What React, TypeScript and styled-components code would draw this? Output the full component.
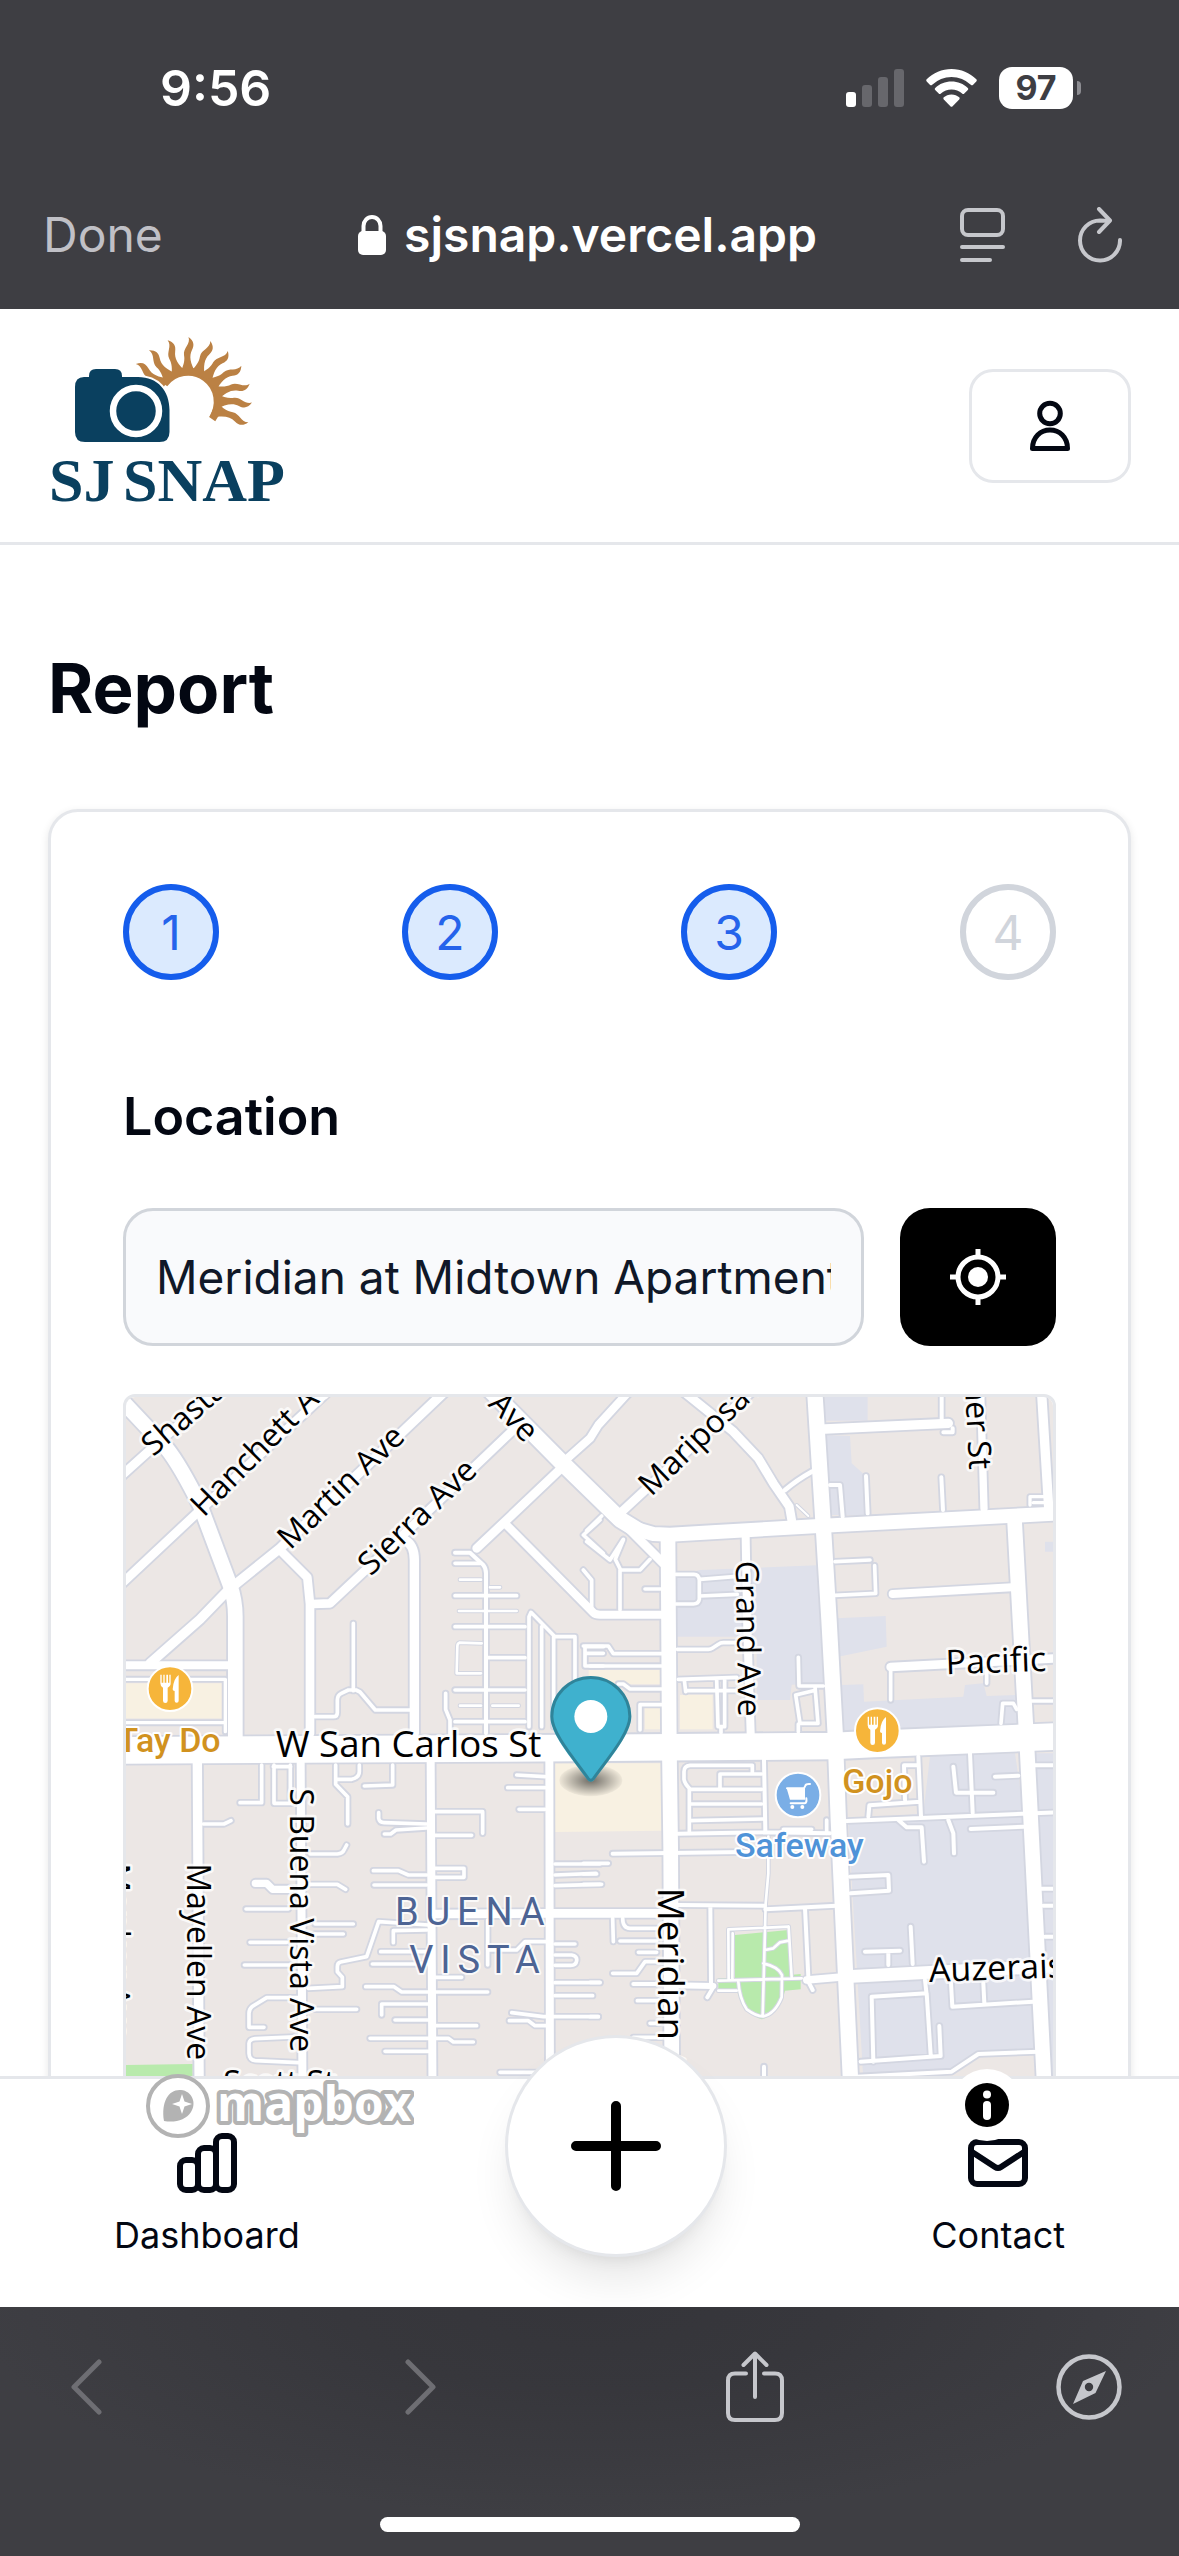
import React, { useState } from 'react';
import styled, { createGlobalStyle } from 'styled-components';

const GlobalStyle = createGlobalStyle`
  *, *::before, *::after { box-sizing: border-box; }
  body {
    margin: 0;
    background: #ffffff;
    color: #030712;
    font-family: Inter, "Liberation Sans", sans-serif;
    -webkit-font-smoothing: antialiased;
  }
  button, input { font: inherit; color: inherit; }
  button { border: 0; padding: 0; background: none; cursor: pointer; }
  h1, h2, ol { margin: 0; padding: 0; }
`;

/* ---------- Shell ---------- */

const Screen = styled.div`
  display: flex;
  flex-direction: column;
  height: 100vh;
`;

const BrowserTop = styled.header`
  flex: none;
  background: #3e3e43;
  padding-bottom: 16px;
`;

const StatusBar = styled.div`
  display: flex;
  align-items: center;
  justify-content: space-between;
  height: 176px;
  padding: 0 98px 0 160px;
  color: #ffffff;
`;

const Clock = styled.time`
  font-size: 50px;
  font-weight: 600;
  line-height: 60px;
`;

const StatusIcons = styled.div`
  display: flex;
  align-items: center;
  gap: 22px;
`;

const Battery = styled.div`
  display: flex;
  align-items: center;
  gap: 4px;
`;

const BatteryLevel = styled.span`
  width: 74px;
  height: 42px;
  border-radius: 13px;
  background: #ffffff;
  color: #3e3e43;
  font-size: 34px;
  font-weight: 700;
  line-height: 42px;
  text-align: center;
`;

const BatteryTip = styled.span`
  width: 4px;
  height: 14px;
  border-radius: 0 4px 4px 0;
  background: #8d8d92;
`;

const AddressBar = styled.div`
  display: grid;
  grid-template-columns: 1fr auto 1fr;
  align-items: center;
  height: 117px;
  padding: 0 57px 0 43px;
`;

const DoneButton = styled.button`
  justify-self: start;
  color: #c0c0c6;
  font-size: 48px;
  line-height: 60px;
`;

const Site = styled.div`
  display: flex;
  align-items: center;
  gap: 18px;
  padding-left: 10px;
  color: #ffffff;
  font-size: 48px;
  font-weight: 600;
  line-height: 60px;
`;

const AddressActions = styled.div`
  display: flex;
  justify-self: end;
  align-items: center;
  gap: 73px;
`;

const IconButton = styled.button<{ $dim?: boolean }>`
  display: flex;
  align-items: center;
  justify-content: center;
  color: ${(p) => (p.$dim ? '#6e6e73' : '#c6c7cc')};
`;

const ToolButton = styled(IconButton)`
  width: 66px;
`;

const Viewport = styled.div`
  position: relative;
  flex: 1;
  min-height: 0;
  overflow: hidden;
  background: #ffffff;
`;

const BrowserBottom = styled.footer`
  flex: none;
  display: flex;
  flex-direction: column;
  justify-content: space-between;
  align-items: center;
  height: 249px;
  padding: 44px 0 24px;
  background: radial-gradient(ellipse 52% 210px at 50% 0, #35353a 0%, #37373c 40%, #3e3e43 100%);
`;

const BrowserTools = styled.div`
  display: flex;
  align-items: center;
  justify-content: space-between;
  align-self: stretch;
  height: 72px;
  padding: 0 57px 0 54px;
`;

const HomeBar = styled.div`
  width: 420px;
  height: 15px;
  border-radius: 8px;
  background: #ffffff;
`;

/* ---------- Site ---------- */

const SiteHeader = styled.header`
  display: flex;
  align-items: center;
  justify-content: space-between;
  height: 236px;
  padding: 0 48px;
  border-bottom: 3px solid #e5e7eb;
`;

const HomeLink = styled.a`
  display: flex;
`;

const AccountButton = styled.button`
  display: flex;
  align-items: center;
  justify-content: center;
  width: 162px;
  height: 114px;
  border: 3px solid #e5e7eb;
  border-radius: 24px;
`;

const Main = styled.main`
  padding: 98px 48px 72px;
`;

const PageTitle = styled.h1`
  margin-bottom: 76px;
  font-size: 69px;
  font-weight: 700;
  line-height: 90px;
`;

const Card = styled.section`
  padding: 72px;
  border: 3px solid #e5e7eb;
  border-radius: 30px;
  background: #ffffff;
  box-shadow: 0 3px 9px rgba(0, 0, 0, 0.1);
`;

const Steps = styled.ol`
  display: flex;
  justify-content: space-between;
  list-style: none;
`;

const Step = styled.li<{ $done: boolean }>`
  display: flex;
  align-items: center;
  justify-content: center;
  width: 96px;
  height: 96px;
  border: 6px solid ${(p) => (p.$done ? '#155dec' : '#d1d5dc')};
  border-radius: 50%;
  background: ${(p) => (p.$done ? '#dbeafe' : '#ffffff')};
  color: ${(p) => (p.$done ? '#2563eb' : '#d1d5dc')};
  font-size: 48px;
`;

const SectionTitle = styled.h2`
  margin: 107px 0 61px;
  font-size: 52px;
  font-weight: 600;
  line-height: 60px;
`;

const SearchRow = styled.div`
  display: flex;
  gap: 36px;
  height: 138px;
  margin-bottom: 48px;
`;

const AddressInput = styled.input`
  flex: 1;
  min-width: 0;
  padding: 0 30px;
  border: 3px solid #d1d5db;
  border-radius: 30px;
  background: #f9fafc;
  color: #101828;
  font-size: 46px;
  outline: none;
`;

const LocateButton = styled.button`
  display: flex;
  flex: none;
  align-items: center;
  justify-content: center;
  width: 156px;
  border-radius: 30px;
  background: #000000;
`;

const MapFrame = styled.div`
  position: relative;
  height: 780px;
  border: 3px solid #e5e7eb;
  border-radius: 12px;
`;

const MapCanvas = styled.svg`
  display: block;
  width: 100%;
  height: 100%;
  border-radius: 9px;
`;

const MapLogo = styled.a`
  position: absolute;
  bottom: 30px;
  left: 18px;
  z-index: 3;
  display: flex;
`;

const InfoButton = styled.button`
  position: absolute;
  right: 30px;
  bottom: 30px;
  z-index: 3;
  display: flex;
  align-items: center;
  justify-content: center;
  width: 72px;
  height: 72px;
  border-radius: 50%;
  background: #ffffff;
`;

const TabBar = styled.nav`
  position: absolute;
  right: 0;
  bottom: 0;
  left: 0;
  z-index: 2;
  display: flex;
  align-items: center;
  justify-content: space-between;
  height: 231px;
  padding: 6px 114px 0;
  border-top: 3px solid #e5e7eb;
  background: #ffffff;
`;

const TabLink = styled.a`
  display: flex;
  flex-direction: column;
  align-items: center;
  gap: 18px;
  color: #030712;
  font-size: 36px;
  line-height: 48px;
  text-decoration: none;
`;

const AddButton = styled.button`
  display: flex;
  align-items: center;
  justify-content: center;
  width: 222px;
  height: 222px;
  margin-top: -100px;
  border: 3px solid #e5e7eb;
  border-radius: 50%;
  background: #ffffff;
  box-shadow: 0 30px 45px -9px rgba(0, 0, 0, 0.1), 0 12px 18px -12px rgba(0, 0, 0, 0.1);
`;

/* ---------- Icons ---------- */

const SignalIcon = () => (
  <svg width="58" height="38" viewBox="0 0 58 38" aria-hidden="true">
    <rect x="0" y="23" width="10" height="15" rx="3" fill="#fff" />
    <rect x="16" y="16" width="10" height="22" rx="3" fill="#67676c" />
    <rect x="32" y="8" width="10" height="30" rx="3" fill="#67676c" />
    <rect x="48" y="0" width="10" height="38" rx="3" fill="#67676c" />
  </svg>
);

const WifiIcon = () => (
  <svg width="51" height="38" viewBox="0 0 51 38" fill="#fff" aria-hidden="true">
    <path d="M25.500 0C35 0 43.800 3.800 50.300 10.200Q51.300 11.300 50.300 12.400L46.900 15.900Q45.900 16.800 44.800 15.800A27.600 27.600 0 0 0 6.200 15.800Q5.100 16.800 4.100 15.900L.7 12.400Q-.3 11.300.7 10.200C7.200 3.800 16 0 25.500 0Z" />
    <path d="M25.500 12.600C31.800 12.600 37.500 15 41.800 18.900Q42.900 20 41.800 21.100L38.300 24.600Q37.300 25.600 36.100 24.600A15.800 15.800 0 0 0 14.900 24.600Q13.700 25.600 12.700 24.600L9.200 21.100Q8.100 20 9.200 18.900C13.500 15 19.200 12.600 25.500 12.600Z" />
    <path d="M25.500 25.500C28.600 25.500 31.200 26.600 33.200 28.300Q34.200 29.300 33.200 30.400L26.600 37.200Q25.500 38.200 24.400 37.200L17.800 30.400Q16.800 29.300 17.800 28.300C19.800 26.600 22.400 25.500 25.500 25.500Z" />
  </svg>
);

const LockIcon = () => (
  <svg width="28" height="40" viewBox="0 0 28 40" aria-hidden="true">
    <rect x="0" y="16" width="28" height="24" rx="5" fill="#fff" />
    <path d="M5.500 18V11a8.500 9 0 0 1 17 0v7" fill="none" stroke="#fff" strokeWidth="4" />
  </svg>
);

const ReaderIcon = () => (
  <svg width="45" height="54" viewBox="0 0 45 54" fill="none" stroke="currentColor" strokeWidth="4" strokeLinecap="round" aria-hidden="true">
    <rect x="2" y="2" width="41" height="25" rx="6" />
    <path d="M2 39h41M2 52h28" />
  </svg>
);

const ReloadIcon = () => (
  <svg width="44" height="56" viewBox="0 0 44 56" fill="none" stroke="currentColor" strokeWidth="4" strokeLinecap="round" strokeLinejoin="round" aria-hidden="true">
    <path d="M42 33A20 20 0 1 1 22 13.500L31 14" />
    <path d="M21 2 32 13.500 21 25" />
  </svg>
);

const ChevronIcon = ({ flip }: { flip?: boolean }) => (
  <svg width="32" height="56" viewBox="0 0 32 56" fill="none" stroke="currentColor" strokeWidth="5" strokeLinecap="round" strokeLinejoin="round" aria-hidden="true">
    <path d={flip ? 'M3 3 28 28 3 53' : 'M28 3 3 28 28 53'} />
  </svg>
);

const ShareIcon = () => (
  <svg width="58" height="72" viewBox="0 0 58 72" fill="none" stroke="currentColor" strokeWidth="4" strokeLinecap="round" strokeLinejoin="round" aria-hidden="true">
    <path d="M20 22.500H9Q2 22.500 2 29.500V62q0 7 7 7h40q7 0 7-7V29.500q0-7-7-7H38" />
    <path d="M29 46V3M17.500 14 29 2.500 40.500 14" />
  </svg>
);

const CompassIcon = () => (
  <svg width="66" height="66" viewBox="0 0 66 66" aria-hidden="true">
    <circle cx="33" cy="33" r="30.500" fill="none" stroke="currentColor" strokeWidth="4.500" />
    <path fill="currentColor" fillRule="evenodd" d="M50 17 39.500 39 17 50 27 27ZM33 28.800a4.200 4.200 0 1 0 0 8.400 4.200 4.200 0 0 0 0-8.400Z" />
  </svg>
);

const PersonIcon = () => (
  <svg width="42" height="52" viewBox="0 0 42 52" fill="none" stroke="#030712" strokeWidth="5" strokeLinejoin="round" aria-hidden="true">
    <circle cx="21" cy="13.500" r="10.300" />
    <path d="M3.500 48.500C3.500 37 11.500 30 21 30s17.500 7 17.500 18.500Z" />
  </svg>
);

const LocateIcon = () => (
  <svg width="56" height="56" viewBox="0 0 56 56" fill="none" stroke="#fff" strokeWidth="5" aria-hidden="true">
    <circle cx="28" cy="28" r="20" />
    <circle cx="28" cy="28" r="10" fill="#fff" stroke="none" />
    <path d="M28 0v8M28 48v8M0 28h8M48 28h8" />
  </svg>
);

const BarsIcon = () => (
  <svg width="60" height="60" viewBox="0 0 60 60" fill="none" stroke="#030712" strokeWidth="6" aria-hidden="true">
    <rect x="3" y="27" width="18" height="30" rx="6" />
    <rect x="21" y="15" width="18" height="42" rx="6" />
    <rect x="39" y="3" width="18" height="54" rx="6" />
  </svg>
);

const MailIcon = () => (
  <svg width="60" height="60" viewBox="0 0 60 60" fill="none" stroke="#030712" strokeWidth="6" aria-hidden="true">
    <rect x="3" y="9" width="54" height="42" rx="6" />
    <path d="m4 19 23 15q3 2 6 0l23-15" />
  </svg>
);

const PlusIcon = () => (
  <svg width="90" height="90" viewBox="0 0 90 90" fill="none" stroke="#000" strokeWidth="10" strokeLinecap="round" aria-hidden="true">
    <path d="M45 5v80M5 45h80" />
  </svg>
);

const InfoIcon = () => (
  <svg width="44" height="44" viewBox="0 0 44 44" aria-hidden="true">
    <circle cx="22" cy="22" r="22" />
    <circle cx="22" cy="11.500" r="4" fill="#fff" />
    <rect x="18" y="18" width="8" height="19" rx="4" fill="#fff" />
  </svg>
);

const rayAngles = [-55, -38, -19, 0, 20, 38, 56, 74, 91, 109];

const Wordmark = styled.text`
  font-family: 'Liberation Serif', serif;
  font-size: 62px;
  font-weight: 700;
  fill: #0a405f;
`;

const Logo = () => (
  <svg width="240" height="184" viewBox="0 0 240 184" role="img" aria-label="SJ Snap">
    <path d="M116 50A29 29 0 1 1 164 85" fill="none" stroke="#bb8144" strokeWidth="8" />
    {rayAngles.map((a) => (
      <path
        key={a}
        fill="#bb8144"
        transform={`translate(140 67) rotate(${a})`}
        d="M-8-28C-4-36-3-41-4-46C-5-53 3-57 .500-64C6-60 6.500-56 4-51C1-45 2-38 8-28Z"
      />
    ))}
    <path d="M117 62A25 25 0 0 1 165 67Q165 77 160 85H117Z" fill="#fff" />
    <path
      fill="#0a405f"
      stroke="#fff"
      strokeWidth="4"
      paintOrder="stroke"
      d="M36 43h5v-1q0-7 7-7h19q7 0 7 7v1h16c20 0 31.500 14 31.500 33v22q0 10-10 10H37q-10 0-10-10V53q0-10 9-10Z"
    />
    <circle cx="88" cy="77" r="23" fill="none" stroke="#fff" strokeWidth="6.500" />
    <Wordmark x="1" y="167">SJ</Wordmark>
    <Wordmark x="75" y="167">SNAP</Wordmark>
  </svg>
);

const MapboxLogo = () => (
  <svg width="270" height="72" viewBox="0 0 270 72" role="img" aria-label="Mapbox">
    <circle cx="34" cy="37" r="30" fill="#fff" stroke="#b3b3b3" strokeWidth="4" />
    <path d="M20 52C17 32 25 20 37 21c11 1 16 13 10 22-5 8-16 11-27 9Z" fill="#b3b3b3" />
    <path d="m38 25 2.500 7.500L48 35l-7.500 2.500L38 45l-2.500-7.500L28 35l7.500-2.500Z" fill="#fff" />
    <text
      x="73"
      y="52"
      fill="#fff"
      stroke="#b3b3b3"
      strokeWidth="8"
      strokeLinejoin="round"
      paintOrder="stroke"
      fontFamily='"Open Sans", sans-serif'
      fontWeight="700"
      fontSize="48"
    >
      mapbox
    </text>
  </svg>
);

/* ---------- Map ---------- */

type Road = [width: number, d: string];
type Tile = { x: number; y: number; roads: Road[] };

/* Roads that run across more than one tile come first. */
const tiles: Tile[] = [
  {
    x: 0,
    y: 0,
    roads: [
      [80, 'M60 1711L1430 1704 2200 1698 2320 1692 2880 1669'],
      [44, 'M1704 1070L1708 1700 1712 2000 1717 2990'],
      [46, 'M2144 630L2170 1040 2187 1320 2205 1650 2215 1920 2265 2990'],
      [44, 'M2743 1010L2760 1320 2782 1720 2832 2700 2845 2990'],
      [42, 'M1600 1045L1660 1062 1710 1064 2170 1037 2880 1000'],
      [48, 'M1150 610L1390 852 1560 1018 1620 1055'],
      [26, 'M1590 1050L1690 1150'],
      [44, 'M50 645L200 805Q240 855 300 975L390 1215Q406 1260 406 1310V1670'],
      [26, 'M50 900L150 810 400 590'],
      [26, 'M50 1225L290 1000 720 600'],
      [28, 'M150 1450L300 1318 385 1230 540 1105 1050 620'],
      [26, 'M540 1110L622 1192 630 1272V1660'],
      [26, 'M636 1272L690 1270 930 1045 1260 730'],
      [28, 'M915 1080Q943 1095 943 1140V1660'],
      [26, 'M1380 868L1215 1025 1130 1105'],
      [24, 'M1380 855L1470 775 1495 735 1600 620'],
      [24, 'M1215 1030L1480 1298Q1486 1304 1500 1304H1700'],
      [12, 'M1065 1118H1110L1150 1155Q1158 1165 1158 1180V1660'],
      [11, 'M1065 1150H1140M1065 1247H1250M1065 1340H1275M1165 1433H1275M1065 1530H1275M1065 1625H1275'],
      [8, 'M1080 1199H1143M1170 1222H1200M1077 1293H1250M1145 1390L1078 1388Q1072 1390 1072 1400L1070 1480H1143M1080 1577H1143M1177 1577H1256'],
      [11, 'M1287 1640V1310L1293 1297 1365 1370H1425V1500M1325 1340V1640M1361 1370V1640'],
      [11, 'M1500 1020L1450 1065 1510 1120'],
      [26, 'M1000 2202L1348 2200H1700'],
    ],
  },
  {
    x: 1470,
    y: 0,
    roads: [
      [28, 'M705 747L1075 730'],
      [12, 'M1055 640V720M1060 757H1088V745M720 915H750L758 1010M828 888L833 1000M1054 892L1059 990'],
      [22, 'M1172 640L1182 985'],
      [28, 'M1355 640L1377 1000'],
      [10, 'M1320 975V950H1368M1330 968H1368'],
      [26, 'M275 630L430 755 505 835 550 910 598 980 605 1020'],
      [14, 'M585 930Q620 900 665 875'],
      [6, 'M620 975L655 1008'],
      [26, 'M90 1000L500 620'],
      [24, 'M467 1070L472 1350 482 1660'],
      [11, 'M735 1145L840 1140M854 1157L857 1240 735 1246M258 1183H312Q326 1183 328 1200V1258Q326 1272 310 1272H258M330 1198L432 1190M330 1248L442 1243M165 1227H212'],
      [24, 'M908 1242L1265 1222'],
      [11, 'M-10 1052L35 1008M-10 1085L60 1140 100 1078M100 1080L76 1138 92 1170H150L180 1138M90 1170V1290M-20 1170L5 1200V1290'],
    ],
  },
  {
    x: 0,
    y: 1320,
    roads: [
      [24, 'M60 136H385'],
      [10, 'M60 178H376V308H60M376 308V335'],
      [11, 'M760 10V212M645 290H700Q712 290 712 278V240Q712 226 724 220L745 210H768L780 216 826 270H930'],
      [11, 'M1037 220V268L1050 300V345'],
      [28, 'M292 430L298 1500'],
      [24, 'M602 430L608 1500M992 425L998 1500M1348 420L1350 1500'],
      [11, 'M485 435V548H420M522 435V550H575M571 435V550M520 440H572M707 435V493L743 530V612M710 478H755Q778 472 778 455V435M878 435V495L793 498'],
      [11, 'M310 612H372L393 602M836 578V595Q838 608 852 608L980 612M853 642H872L888 630 980 624M1005 575H1148V640M1005 646H1115M1250 465L1335 470M1223 503H1335M1257 568H1335'],
      [11, 'M630 702H712Q728 700 732 690L740 675M820 752H895L925 765H980M1005 745H1092V772H1005M822 795H980M630 793H712L737 808M438 867H565M645 912H760M645 942H730M450 967H560M433 1035H570'],
      [22, 'M466 790H500L518 808H570'],
      [11, 'M985 915L836 905 800 1010 722 1026Q712 1028 712 1040V1055L727 1072V1100L625 1105M980 930L880 932V968M842 995H980M817 1032H980M1005 1072H1085M797 1100H882L905 1116H1163'],
      [11, 'M600 1133H500L456 1160Q447 1168 447 1180V1222H492M645 1168H770M845 1185V1152H985M885 1200H985M1010 1217H1130M600 1250L465 1256Q448 1258 447 1270V1300Q448 1320 466 1322L595 1328'],
      [11, 'M810 1255H1045L1060 1266H1120M855 1294H985M1200 1357H1320M1163 900V1035M1340 965H1275L1250 990H1163'],
      [11, 'M1365 732H1500M1365 765L1488 760M1365 797L1500 793M1365 972H1425M1365 1005H1415Q1432 1008 1430 1022 1428 1036 1412 1036H1365M1365 1088H1500M1365 1127H1478M1235 1178L1330 1190H1495M1228 1202H1285L1305 1217H1340'],
      [11, 'M1510 80H1455V138H1510M1455 100H1510'],
    ],
  },
  {
    x: 1470,
    y: 1320,
    roads: [
      [11, 'M262 88H355Q362 88 368 84L385 73Q391 68 400 68H440M265 178L440 172M-20 78H55L70 101H215M0 138H215M85 192H100L120 207H215M215 254H150V330M380 178L384 320H404V180M283 180L287 215M287 212H440M393 320V338'],
      [11, 'M625 112L627 198H700M675 200L684 310H630L617 225 670 212M625 312V335M902 150V240M1190 150V190M1233 310L1238 250H1270L1280 268M1325 243H1400'],
      [26, 'M902 141L1400 115'],
      [12, 'M522 420L526 632M265 641L530 637 720 640M68 701L540 695M265 855L522 857M526 868L740 857M645 865L655 1070M361 860L363 1090'],
      [11, 'M487 460V436H300Q282 438 282 455V478Q284 490 298 505V635M390 505V462H515M298 508H515M298 552H515M298 602L520 597M580 628H665M710 600V640'],
      [22, 'M650 1080L860 1062'],
      [38, 'M770 1070L1400 1038'],
      [18, 'M250 1096L370 1098'],
      [12, 'M130 1092H250M655 1085L668 1110M352 1132L368 1105'],
      [11, 'M68 895L70 965M98 895Q98 925 120 925H200M90 963H200M145 997H200M68 1060H140L165 1025H210M142 1142H205M180 1210H210M0 1087H30M0 1190H25M-20 730H55M-20 762H20M-20 793H35M130 1252H215'],
      [8, 'M535 650V760L527 850 525 930 518 1188M595 920L415 928 416 1078M596 920L605 1072M428 940L427 1078M385 1082L635 1075M445 1085Q448 1135 470 1168 500 1190 520 1189 555 1182 575 1132L576 1065Q565 1040 520 1030M525 990L550 985 570 967 596 962M385 1112H440'],
      [12, 'M770 603L1400 577M985 410L993 590M945 540L942 436 985 435M835 590L838 556 990 545M1090 440L1098 518H1210M1140 400L1148 578M1215 470L1285 467M925 600L950 622H995L1002 725M1075 600L1090 640 1092 700M1142 627L1300 620'],
      [12, 'M780 770L895 765 897 812 782 820M825 995L930 992M895 995V1035M962 920L968 1032M850 1325L845 1130 1010 1120 1022 1305M1005 1080L1010 1125M1048 1218L1052 1308 812 1325M1083 1090L1087 1160 1330 1145M1180 1090L1183 1150'],
      [12, 'M1345 1295L1165 1302 1085 1355 800 1370M1335 436H1400M1355 806H1400M1360 857H1400M1365 950H1400M522 1340V1500'],
    ],
  },
];

const blueAreas =
  'M2175 651H2303V722H2175ZM2175 765L2250 768 2255 850 2300 890V1005H2190ZM1730 1190L1800 1170 2150 1156 2170 1510 2075 1514 2070 1560H1970V1370H1730ZM2835 1085H2860V1115H2835ZM2210 1315L2357 1308 2360 1400 2215 1430ZM2225 1515L2290 1513 2292 1565 2590 1550 2595 1515 2650 1510 2660 1548 2750 1545 2755 1640 2225 1655ZM2490 1728L2745 1720 2770 1890 2815 2610 2640 2620 2550 2680 2290 2700 2245 1925 2470 1900ZM2805 1720H2860V2990H2840Z';
const creamAreas =
  'M78 1510H365V1615H78ZM1365 1750H1685V1952L1365 1956ZM1466 1470H1688V1512H1466ZM1635 1580H1686V1648H1635ZM1740 1545H1838V1648H1740Z';
const greenAreas =
  'M78 2655L278 2652V2990H78ZM1905 2265L2065 2250 2070 2385 2102 2382V2428L2055 2432Q2040 2500 1985 2518 1930 2500 1910 2430H1855V2395H1905Z';

type Label = { text: string; x: number; y: number; r: number; size: number; end?: boolean };

const streets: Label[] = [
  { text: 'Shasta Ave', x: 160, y: 832, r: -41, size: 96 },
  { text: 'Hanchett Ave', x: 311, y: 1014, r: -45, size: 96 },
  { text: 'Martin Ave', x: 571, y: 1112, r: -44, size: 96 },
  { text: 'Sierra Ave', x: 812, y: 1190, r: -44, size: 96 },
  { text: 'Ave', x: 1162, y: 675, r: 46, size: 96 },
  { text: 'Mariposa Ave', x: 1654, y: 952, r: -44, size: 96 },
  { text: 'ner St', x: 2608, y: 870, r: 87, size: 96, end: true },
  { text: 'Grand Ave', x: 1907, y: 1143, r: 89, size: 96 },
  { text: 'Pacific', x: 2538, y: 1483, r: -2, size: 102 },
  { text: 'W San Carlos St', x: 527, y: 1731, r: 0, size: 110 },
  { text: 'Mayellen Ave', x: 262, y: 2050, r: 90, size: 96 },
  { text: 'S Buena Vista Ave', x: 570, y: 1825, r: 90, size: 96 },
  { text: 'Menker Ave', x: 19, y: 2050, r: 90, size: 96 },
  { text: 'Meridian Ave', x: 1675, y: 2123, r: 90, size: 110 },
  { text: 'Auzerais Ave', x: 2488, y: 2406, r: -2, size: 102 },
  { text: 'Scott St', x: 370, y: 2743, r: 0, size: 96 },
];

const StreetText = styled.text`
  font-family: 'Open Sans', 'Noto Sans', sans-serif;
  fill: #000000;
  stroke: rgba(255, 255, 255, 0.75);
  stroke-width: 16px;
  stroke-linejoin: round;
  paint-order: stroke;
`;

const PlaceText = styled.text<{ $color: string }>`
  font-family: Roboto, sans-serif;
  font-size: 102px;
  font-weight: 500;
  fill: ${(p) => p.$color};
  stroke: #ffffff;
  stroke-width: 12px;
  stroke-linejoin: round;
  paint-order: stroke;
`;

const AreaText = styled.text`
  font-family: Roboto, sans-serif;
  font-size: 114px;
  letter-spacing: 0.18em;
  fill: #4d6494;
  stroke: rgba(255, 255, 255, 0.8);
  stroke-width: 12px;
  stroke-linejoin: round;
  paint-order: stroke;
`;

const FoodPin = ({ x, y }: { x: number; y: number }) => (
  <g transform={`translate(${x} ${y})`}>
    <circle r="67" fill="#f6b53a" stroke="#fff" strokeWidth="6" />
    <path
      fill="#fff"
      d="M-29-42v26q0 9 8 13V36a7 7 0 0 0 14 0V-3q9-4 9-13V-42h-4v24h-4V-42h-5v24h-5V-42h-4v24h-5V-42ZM26-41Q10-30 8 2q0 5 6 5V36a6 6 0 0 0 12 0Z"
    />
  </g>
);

const StreetMap = () => (
  <MapCanvas viewBox="78 651 2781 2322" preserveAspectRatio="xMidYMin slice" role="img" aria-label="Map of Buena Vista">
    <defs>
      <radialGradient id="pin-shadow">
        <stop offset="10%" stopOpacity="0.5" />
        <stop offset="100%" stopOpacity="0.04" />
      </radialGradient>
    </defs>
    <rect x="78" y="651" width="2781" height="2322" fill="#ece7e5" />
    <path d={blueAreas} fill="#dfe1eb" />
    <path d={creamAreas} fill="#f8f1e2" />
    <path d={greenAreas} fill="#b8eaac" />
    {[true, false].map((casing) => (
      <g key={String(casing)} fill="none" stroke={casing ? '#d3d6e1' : '#ffffff'} strokeLinecap="round" strokeLinejoin="round">
        {tiles.map((tile) => (
          <g key={`${tile.x}-${tile.y}`} transform={`translate(${tile.x} ${tile.y})`}>
            {tile.roads.map(([width, d]) => (
              <path key={d} d={d} strokeWidth={casing ? width + (width < 10 ? 6 : 11) : width} />
            ))}
          </g>
        ))}
      </g>
    ))}
    {streets.map((s) => (
      <StreetText key={s.text} fontSize={s.size} textAnchor={s.end ? 'end' : 'start'} transform={`translate(${s.x} ${s.y}) rotate(${s.r})`}>
        {s.text}
      </StreetText>
    ))}
    <AreaText x="885" y="2235">BUENA</AreaText>
    <AreaText x="928" y="2380">VISTA</AreaText>
    <FoodPin x={210} y={1526} />
    <PlaceText $color="#d1921f" x="362" y="1715" textAnchor="end">Tay Do</PlaceText>
    <FoodPin x={2332} y={1652} />
    <PlaceText $color="#d1921f" x="2332" y="1840" textAnchor="middle">Gojo</PlaceText>
    <g transform="translate(2094 1845)">
      <circle r="67" fill="#7aaee6" stroke="#fff" strokeWidth="6" />
      <path d="M-33-20H18L22-28Q24-34 36-33" fill="none" stroke="#fff" strokeWidth="6" strokeLinecap="round" />
      <path d="M-34-20H21V14H-24Z" fill="#fff" />
      <path d="M-22 25H20Q27 24 25 10" fill="none" stroke="#fff" strokeWidth="6" strokeLinecap="round" />
      <circle cx="-17" cy="36" r="6" fill="#fff" />
      <circle cx="13" cy="36" r="6" fill="#fff" />
    </g>
    <PlaceText $color="#4f93d8" x="2098" y="2032" textAnchor="middle">Safeway</PlaceText>
    <g transform="translate(1351 1488) scale(9)">
      <ellipse cx="13.500" cy="34.800" rx="10.500" ry="5.250" fill="url(#pin-shadow)" />
      <path
        fill="#3fb1ce"
        d="M27 13.500C27 19.070 20.250 27 14.750 34.500C14.020 35.500 12.980 35.500 12.250 34.500C6.750 27 0 19.220 0 13.500C0 6.040 6.040 0 13.500 0C20.960 0 27 6.040 27 13.500Z"
      />
      <path
        fill="none"
        stroke="#000"
        strokeOpacity="0.25"
        d="M26.500 13.500C26.500 18.800 19.900 26.600 14.350 34.200C13.800 34.900 13.200 34.900 12.650 34.200C7.100 26.600 .5 18.900 .5 13.500C.5 6.300 6.300 .5 13.500 .5C20.700 .5 26.500 6.300 26.500 13.500Z"
      />
      <circle cx="13.500" cy="13.500" r="5.500" fill="#fff" />
    </g>
  </MapCanvas>
);

/* ---------- Page ---------- */

const CURRENT_STEP = 3;

export default function App() {
  const [address, setAddress] = useState('Meridian at Midtown Apartments');

  return (
    <>
      <GlobalStyle />
      <Screen>
        <BrowserTop>
          <StatusBar>
            <Clock>9:56</Clock>
            <StatusIcons>
              <SignalIcon />
              <WifiIcon />
              <Battery>
                <BatteryLevel>97</BatteryLevel>
                <BatteryTip />
              </Battery>
            </StatusIcons>
          </StatusBar>
          <AddressBar>
            <DoneButton type="button">Done</DoneButton>
            <Site>
              <LockIcon />
              sjsnap.vercel.app
            </Site>
            <AddressActions>
              <IconButton type="button" aria-label="Reader view"><ReaderIcon /></IconButton>
              <IconButton type="button" aria-label="Reload"><ReloadIcon /></IconButton>
            </AddressActions>
          </AddressBar>
        </BrowserTop>

        <Viewport>
          <SiteHeader>
            <HomeLink href="#home"><Logo /></HomeLink>
            <AccountButton type="button" aria-label="Account"><PersonIcon /></AccountButton>
          </SiteHeader>

          <Main>
            <PageTitle>Report</PageTitle>
            <Card>
              <Steps>
                {[1, 2, 3, 4].map((n) => (
                  <Step key={n} $done={n <= CURRENT_STEP}>{n}</Step>
                ))}
              </Steps>
              <SectionTitle>
                <label htmlFor="address">Location</label>
              </SectionTitle>
              <SearchRow>
                <AddressInput id="address" type="text" value={address} onChange={(e) => setAddress(e.target.value)} />
                <LocateButton type="button" aria-label="Use my location"><LocateIcon /></LocateButton>
              </SearchRow>
              <MapFrame>
                <StreetMap />
                <MapLogo href="#mapbox"><MapboxLogo /></MapLogo>
                <InfoButton type="button" aria-label="Map attribution"><InfoIcon /></InfoButton>
              </MapFrame>
            </Card>
          </Main>

          <TabBar>
            <TabLink href="#dashboard">
              <BarsIcon />
              Dashboard
            </TabLink>
            <AddButton type="button" aria-label="New report"><PlusIcon /></AddButton>
            <TabLink href="#contact">
              <MailIcon />
              Contact
            </TabLink>
          </TabBar>
        </Viewport>

        <BrowserBottom>
          <BrowserTools>
            <ToolButton type="button" $dim aria-label="Back"><ChevronIcon /></ToolButton>
            <ToolButton type="button" $dim aria-label="Forward"><ChevronIcon flip /></ToolButton>
            <ToolButton type="button" aria-label="Share"><ShareIcon /></ToolButton>
            <ToolButton type="button" aria-label="Open in browser"><CompassIcon /></ToolButton>
          </BrowserTools>
          <HomeBar />
        </BrowserBottom>
      </Screen>
    </>
  );
}
